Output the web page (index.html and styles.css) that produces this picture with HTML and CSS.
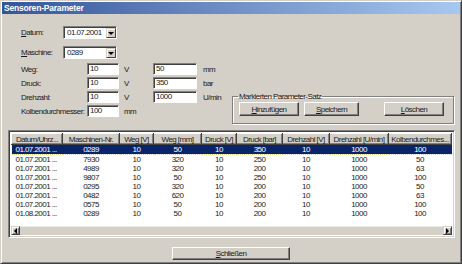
FILE: index.html
```html
<!DOCTYPE html>
<html lang="de">
<head>
    <meta charset="UTF-8">
    <title>Sensoren-Parameter</title>
    <link rel="stylesheet" href="styles.css">
</head>
<body>
    <div class="window">
        <div class="titlebar">Sensoren-Parameter</div>

        <div class="top-fields">
            <div class="top-row">
                <span class="label"><u>D</u>atum:</span>
                <div class="combo">
                    <span class="combo-value">01.07.2001</span>
                    <span class="combo-btn"><span class="arrow-down"></span></span>
                </div>
            </div>
            <div class="top-row">
                <span class="label"><u>M</u>aschine:</span>
                <div class="combo">
                    <span class="combo-value">0289</span>
                    <span class="combo-btn"><span class="arrow-down"></span></span>
                </div>
            </div>
        </div>

        <div class="main">
            <div class="fields">
                <span class="label">Weg:</span>
                <span class="edit small">10</span>
                <span class="unit-v">V</span>
                <span class="edit wide">50</span>
                <span class="unit">mm</span>

                <span class="label">Druck:</span>
                <span class="edit small">10</span>
                <span class="unit-v">V</span>
                <span class="edit wide">350</span>
                <span class="unit">bar</span>

                <span class="label">Drehzahl:</span>
                <span class="edit small">10</span>
                <span class="unit-v">V</span>
                <span class="edit wide">1000</span>
                <span class="unit">U/min</span>

                <span class="label">Kolbendurchmesser:</span>
                <span class="edit small">100</span>
                <span class="unit-v">mm</span>
            </div>

            <fieldset class="group">
                <legend>Markierten Parameter-Satz</legend>
                <div class="group-buttons">
                    <button class="btn"><u>H</u>inzufügen</button>
                    <button class="btn"><u>S</u>peichern</button>
                    <button class="btn btn-right"><u>L</u>öschen</button>
                </div>
            </fieldset>
        </div>

        <div class="listview">
            <table class="grid">
                <colgroup>
                    <col style="width:51px"><col style="width:57px"><col style="width:34px">
                    <col style="width:48px"><col style="width:35px"><col style="width:46px">
                    <col style="width:47px"><col style="width:59px"><col style="width:63px">
                </colgroup>
                <thead>
                    <tr>
                        <th>Datum/Uhrz...</th><th>Maschinen-Nr.</th><th>Weg [V]</th>
                        <th>Weg [mm]</th><th>Druck [V]</th><th>Druck [bar]</th>
                        <th>Drehzahl [V]</th><th>Drehzahl [U/min]</th><th>Kolbendurchmes...</th>
                    </tr>
                </thead>
                <tbody>
                    <tr class="selected"><td>01.07.2001 ...</td><td>0289</td><td>10</td><td>50</td><td>10</td><td>350</td><td>10</td><td>1000</td><td>100</td></tr>
                    <tr><td>01.07.2001 ...</td><td>7930</td><td>10</td><td>320</td><td>10</td><td>250</td><td>10</td><td>1000</td><td>50</td></tr>
                    <tr><td>01.07.2001 ...</td><td>4989</td><td>10</td><td>320</td><td>10</td><td>200</td><td>10</td><td>1000</td><td>63</td></tr>
                    <tr><td>01.07.2001 ...</td><td>9807</td><td>10</td><td>50</td><td>10</td><td>250</td><td>10</td><td>1000</td><td>100</td></tr>
                    <tr><td>01.07.2001 ...</td><td>0295</td><td>10</td><td>320</td><td>10</td><td>200</td><td>10</td><td>1000</td><td>50</td></tr>
                    <tr><td>01.07.2001 ...</td><td>0482</td><td>10</td><td>620</td><td>10</td><td>200</td><td>10</td><td>1000</td><td>63</td></tr>
                    <tr><td>01.07.2001 ...</td><td>0575</td><td>10</td><td>50</td><td>10</td><td>200</td><td>10</td><td>1000</td><td>100</td></tr>
                    <tr><td>01.08.2001 ...</td><td>0289</td><td>10</td><td>50</td><td>10</td><td>200</td><td>10</td><td>1000</td><td>100</td></tr>
                </tbody>
            </table>
            <div class="hscroll">
                <span class="sb-btn"><span class="arrow-left"></span></span>
                <span class="sb-track"></span>
                <span class="sb-btn"><span class="arrow-right"></span></span>
            </div>
        </div>

        <div class="footer">
            <button class="btn btn-close"><u>S</u>chließen</button>
        </div>
    </div>
</body>
</html>
```

FILE: styles.css
```css
:root {
    --face: #D4D0C8;
    --shadow: #808080;
    --dark: #404040;
    --light: #FFFFFF;
    --select: #0A246A;
}

* {
    box-sizing: border-box;
    margin: 0;
    padding: 0;
}

body {
    font-family: 'Liberation Sans', Arial, sans-serif;
    font-size: 8px;
    letter-spacing: -0.55px;
    color: #1a1a1a;
    background: var(--face);
    width: 462px;
    height: 264px;
    overflow: hidden;
}

u {
    text-decoration: underline;
}

.window {
    width: 462px;
    height: 264px;
    background: var(--face);
    border: 1px solid;
    border-color: var(--face) var(--dark) var(--dark) var(--face);
    box-shadow: inset 1px 1px 0 var(--light), inset -1px -1px 0 var(--shadow);
    padding: 1px;
    display: flex;
    flex-direction: column;
}

.titlebar {
    height: 12px;
    line-height: 12px;
    padding-left: 2px;
    font-weight: bold;
    font-size: 8.5px;
    letter-spacing: -0.2px;
    color: #fff;
    background: linear-gradient(to right, #34559a, #6f90c6 50%, #a6c8f0);
}

/* top combos */
.top-fields {
    margin-top: 12px;
    padding-left: 19px;
    display: flex;
    flex-direction: column;
    gap: 7px;
}

.top-row {
    display: flex;
    align-items: center;
    height: 13px;
}

.top-row .label {
    width: 42px;
}

.combo {
    width: 54px;
    height: 13px;
    background: #fff;
    border: 1px solid;
    border-color: var(--shadow) var(--light) var(--light) var(--shadow);
    box-shadow: inset 1px 1px 0 var(--dark);
    display: flex;
    align-items: center;
    padding-left: 3px;
}

.combo-value {
    flex: 1;
}

.combo-btn {
    width: 10px;
    height: 10px;
    margin-top: 1px;
    background: var(--face);
    border: 1px solid;
    border-color: var(--face) var(--dark) var(--dark) var(--face);
    box-shadow: inset 1px 1px 0 var(--light);
    display: flex;
    align-items: center;
    justify-content: center;
}

.arrow-down {
    width: 0;
    height: 0;
    border-left: 3px solid transparent;
    border-right: 3px solid transparent;
    border-top: 3px solid #000;
}

/* parameter fields */
.main {
    display: flex;
    padding-left: 19px;
    margin-top: 4px;
}

.fields {
    width: 211px;
    display: grid;
    grid-template-columns: 66px 32px 34px 44px auto;
    grid-auto-rows: 12px;
    row-gap: 2px;
    align-items: center;
}

.edit {
    height: 12px;
    line-height: 10px;
    background: #fff;
    border: 1px solid;
    border-color: var(--shadow) var(--light) var(--light) var(--shadow);
    box-shadow: inset 1px 1px 0 var(--dark);
    padding-left: 2px;
}

.unit-v {
    padding-left: 5px;
}

.unit {
    padding-left: 6px;
}

.group {
    margin-top: 29px;
    width: 222px;
    height: 32px;
    border: 1px solid var(--shadow);
    box-shadow: 1px 1px 0 var(--light), inset 1px 1px 0 var(--light);
    padding: 0 0 0 6px;
}

.group legend {
    padding: 0 1px;
    margin-left: -1px;
    line-height: 9px;
}

.group-buttons {
    display: flex;
    margin-top: 1px;
}

.btn {
    font-family: inherit;
    font-size: 8px;
    letter-spacing: -0.55px;
    width: 60px;
    height: 14px;
    background: var(--face);
    color: #1a1a1a;
    border: 1px solid;
    border-color: var(--light) var(--dark) var(--dark) var(--light);
    box-shadow: inset -1px -1px 0 var(--shadow);
    margin-right: 5px;
}

.group-buttons .btn:nth-child(2) {
    width: 55px;
}

.btn-right {
    margin-left: 20px;
}

/* list view */
.listview {
    margin: 6px 0 0 6px;
    width: 447px;
    height: 108px;
    background: #fff;
    border: 1px solid;
    border-color: var(--shadow) var(--light) var(--light) var(--shadow);
    box-shadow: inset 1px 1px 0 var(--dark), inset -1px -1px 0 var(--face);
    padding: 2px;
    display: flex;
    flex-direction: column;
}

.grid {
    border-collapse: collapse;
    table-layout: fixed;
    width: 440px;
}

.grid th {
    height: 11px;
    font-weight: normal;
    background: var(--face);
    border: 1px solid;
    border-color: var(--light) var(--dark) var(--dark) var(--light);
    box-shadow: inset -1px -1px 0 var(--shadow);
    white-space: nowrap;
    overflow: hidden;
    text-align: center;
    line-height: 9px;
    padding: 0 2px;
}

.grid td {
    height: 9px;
    line-height: 9px;
    text-align: center;
    white-space: nowrap;
    overflow: hidden;
}

.grid td:first-child {
    text-align: left;
    padding-left: 4px;
}

.grid tr.selected td {
    background: var(--select);
    color: #fff;
    border-top: 1px dotted #d8d880;
    border-bottom: 1px dotted #d8d880;
}

.hscroll {
    margin-top: auto;
    height: 9px;
    display: flex;
    background: var(--face);
}

.sb-btn {
    width: 9px;
    height: 9px;
    background: var(--face);
    border: 1px solid;
    border-color: var(--face) var(--dark) var(--dark) var(--face);
    box-shadow: inset 1px 1px 0 var(--light), inset -1px -1px 0 var(--shadow);
    display: flex;
    align-items: center;
    justify-content: center;
}

.sb-track {
    flex: 1;
    background: var(--face);
    border-top: 1px solid #ecebe8;
}

.arrow-left {
    border-top: 3px solid transparent;
    border-bottom: 3px solid transparent;
    border-right: 3px solid #000;
}

.arrow-right {
    border-top: 3px solid transparent;
    border-bottom: 3px solid transparent;
    border-left: 3px solid #000;
}

.footer {
    display: flex;
    justify-content: center;
    margin-top: 9px;
}

.btn-close {
    width: 118px;
    height: 13px;
    margin: 0;
}
```
